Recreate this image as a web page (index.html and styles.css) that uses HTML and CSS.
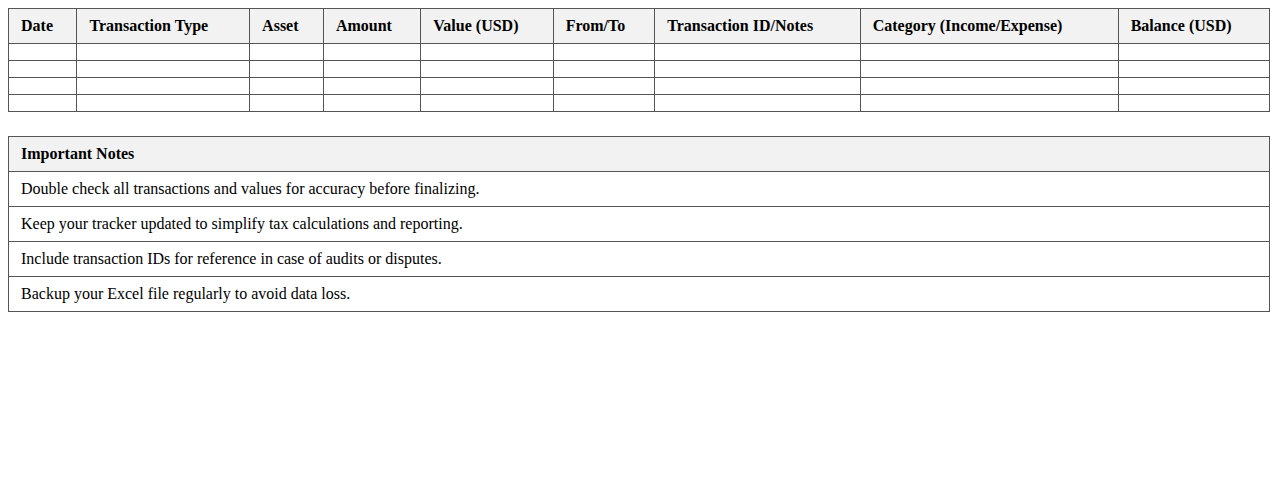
FILE: index.html
```html
<!DOCTYPE html>
<html>
<head>
<meta charset="utf-8">
<link rel="stylesheet" href="styles.css">
</head>
<body>
<table class="grid">
  <thead>
    <tr>
      <th>Date</th>
      <th>Transaction Type</th>
      <th>Asset</th>
      <th>Amount</th>
      <th>Value (USD)</th>
      <th>From/To</th>
      <th>Transaction ID/Notes</th>
      <th>Category (Income/Expense)</th>
      <th>Balance (USD)</th>
    </tr>
  </thead>
  <tbody>
    <tr><td></td><td></td><td></td><td></td><td></td><td></td><td></td><td></td><td></td></tr>
    <tr><td></td><td></td><td></td><td></td><td></td><td></td><td></td><td></td><td></td></tr>
    <tr><td></td><td></td><td></td><td></td><td></td><td></td><td></td><td></td><td></td></tr>
    <tr><td></td><td></td><td></td><td></td><td></td><td></td><td></td><td></td><td></td></tr>
  </tbody>
</table>
<table class="grid notes">
  <thead>
    <tr><th>Important Notes</th></tr>
  </thead>
  <tbody>
    <tr><td>Double check all transactions and values for accuracy before finalizing.</td></tr>
    <tr><td>Keep your tracker updated to simplify tax calculations and reporting.</td></tr>
    <tr><td>Include transaction IDs for reference in case of audits or disputes.</td></tr>
    <tr><td>Backup your Excel file regularly to avoid data loss.</td></tr>
  </tbody>
</table>
</body>
</html>
```

FILE: styles.css
```css
body {
  margin: 8px;
  font-family: "Liberation Serif", "Times New Roman", serif;
  font-size: 16px;
  color: #000;
  background: #fff;
}
.grid {
  width: 100%;
  border-collapse: collapse;
  margin-bottom: 24px;
}
.grid th,
.grid td {
  border: 1px solid #555;
  padding: 8px 12px;
  text-align: left;
}
.grid th {
  background: #f2f2f2;
  font-weight: bold;
}
```
